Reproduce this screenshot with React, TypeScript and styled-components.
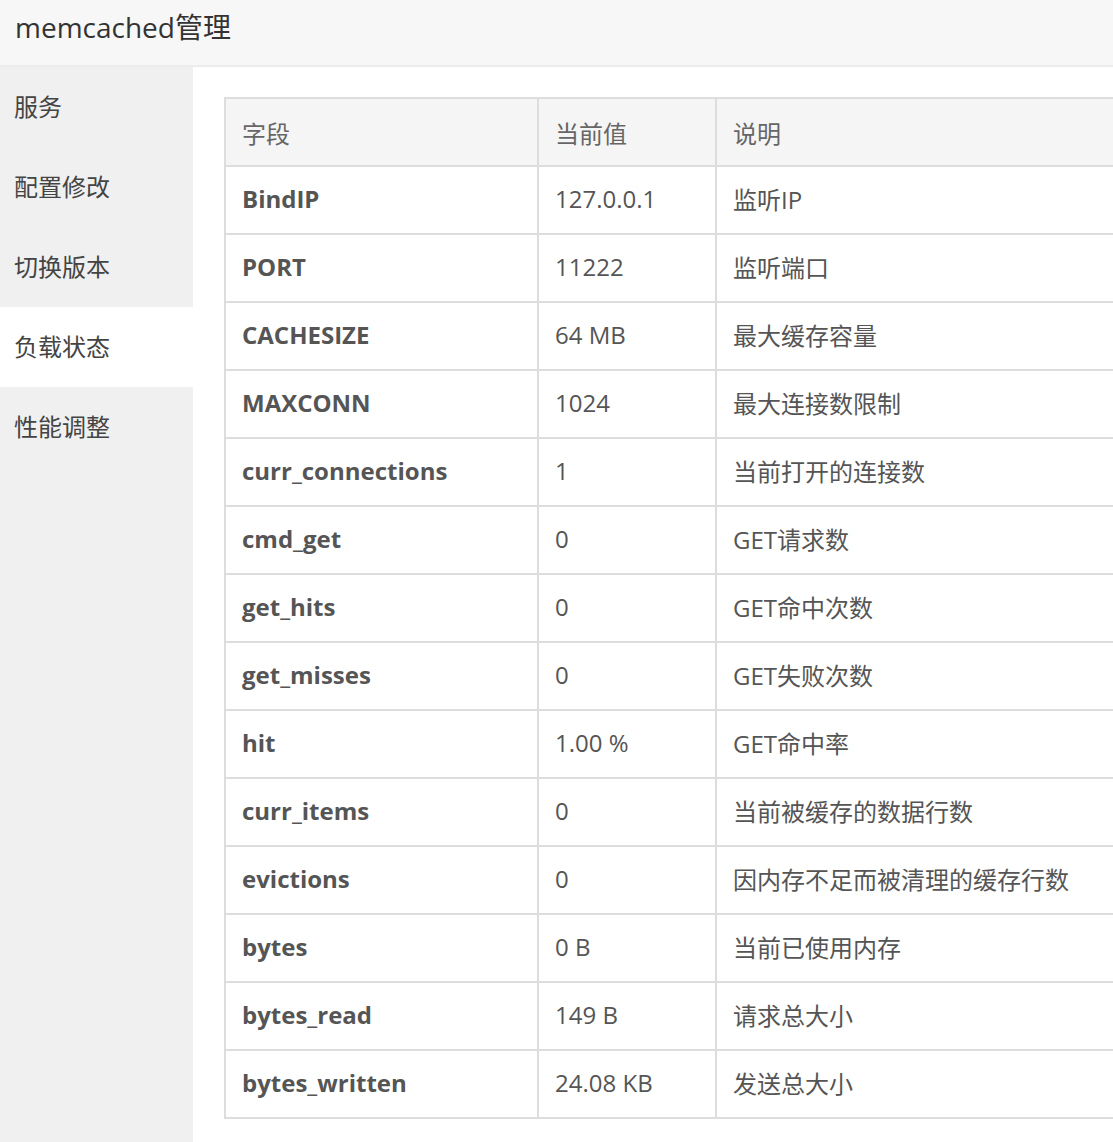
import React from "react"
import styled, { createGlobalStyle } from "styled-components"

const GlobalStyle = createGlobalStyle`
  html, body {
    margin: 0;
    padding: 0;
    background: #fff;
    overflow: hidden;
  }
  body {
    font-family: "Open Sans", "Noto Sans CJK SC", sans-serif;
    color: #555;
  }
`

const Page = styled.div`
  display: flex;
  flex-direction: column;
  width: 1113px;
  height: 1142px;
  overflow: hidden;
`

const Header = styled.div`
  flex: 0 0 auto;
  height: 67px;
  box-sizing: border-box;
  background: #f7f7f7;
  border-bottom: 2px solid #ececec;
  display: flex;
  align-items: center;
  padding-left: 15px;
  padding-bottom: 14px;
  font-size: 28px;
  color: #333;
`

const Body = styled.div`
  display: flex;
  flex: 1;
  min-height: 0;
`

const Sidebar = styled.div`
  width: 193px;
  flex: 0 0 193px;
  background: #f0f0f0;
  display: flex;
  flex-direction: column;
`

const NavItem = styled.div<{ $active?: boolean }>`
  height: 80px;
  display: flex;
  align-items: center;
  padding-left: 14px;
  padding-bottom: 3px;
  box-sizing: border-box;
  font-size: 24px;
  color: #444;
  background: ${(p) => (p.$active ? "#fff" : "transparent")};
`

const Main = styled.div`
  flex: 1;
  padding: 30px 0 0 31px;
  min-width: 0;
`

const Table = styled.table`
  width: 980px;
  border-collapse: collapse;
  border: 2px solid #ddd;
  font-size: 24px;
`

const Th = styled.th<{ $w?: number }>`
  height: 68px;
  box-sizing: border-box;
  text-align: left;
  font-weight: normal;
  padding: 0 12px 0 16px;
  background: #f5f5f5;
  color: #666;
  border: 2px solid #ddd;
  width: ${(p) => (p.$w ? `${p.$w}px` : "auto")};
`

const Td = styled.td<{ $bold?: boolean }>`
  height: 68px;
  box-sizing: border-box;
  padding: 0 12px 3px 16px;
  border: 2px solid #ddd;
  color: #555;
  white-space: nowrap;
  font-weight: ${(p) => (p.$bold ? 700 : 400)};
`

const nav = ["服务", "配置修改", "切换版本", "负载状态", "性能调整"]

const rows: [string, string, string][] = [
  ["BindIP", "127.0.0.1", "监听IP"],
  ["PORT", "11222", "监听端口"],
  ["CACHESIZE", "64 MB", "最大缓存容量"],
  ["MAXCONN", "1024", "最大连接数限制"],
  ["curr_connections", "1", "当前打开的连接数"],
  ["cmd_get", "0", "GET请求数"],
  ["get_hits", "0", "GET命中次数"],
  ["get_misses", "0", "GET失败次数"],
  ["hit", "1.00 %", "GET命中率"],
  ["curr_items", "0", "当前被缓存的数据行数"],
  ["evictions", "0", "因内存不足而被清理的缓存行数"],
  ["bytes", "0 B", "当前已使用内存"],
  ["bytes_read", "149 B", "请求总大小"],
  ["bytes_written", "24.08 KB", "发送总大小"],
]

export default function App() {
  return (
    <Page>
      <GlobalStyle />
      <Header>memcached管理</Header>
      <Body>
        <Sidebar>
          {nav.map((n) => (
            <NavItem key={n} $active={n === "负载状态"}>
              {n}
            </NavItem>
          ))}
        </Sidebar>
        <Main>
          <Table>
            <thead>
              <tr>
                <Th $w={313}>字段</Th>
                <Th $w={178}>当前值</Th>
                <Th>说明</Th>
              </tr>
            </thead>
            <tbody>
              {rows.map(([k, v, d]) => (
                <tr key={k}>
                  <Td $bold>{k}</Td>
                  <Td>{v}</Td>
                  <Td>{d}</Td>
                </tr>
              ))}
            </tbody>
          </Table>
        </Main>
      </Body>
    </Page>
  )
}
